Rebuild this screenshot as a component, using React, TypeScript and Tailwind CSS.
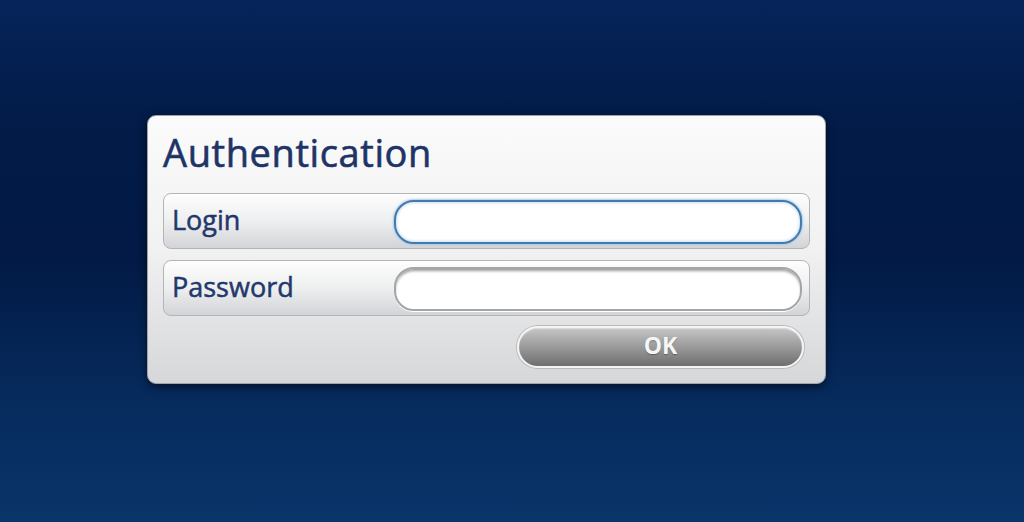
import React from 'react';

function Field({ label, focused }: { label: string; focused?: boolean }) {
    return (
        <div className="flex h-[56px] items-center rounded-[8px] border border-[#b3b4b7] bg-gradient-to-b from-[#fdfdfd] via-[#eeeff0] to-[#d3d4d7] pl-[8px] pr-[7px] shadow-[inset_0_1px_0_#ffffff]">
            <span className="mb-[4px] w-[222px] text-[27px] leading-none tracking-[0px] text-[#22386b] [-webkit-text-stroke:0.5px_#22386b]">{label}</span>
            <div
                className={
                    focused
                        ? 'mt-[1px] h-[44px] flex-1 rounded-[20px] border-2 border-[#4579ab] bg-white shadow-[0_0_2px_1px_#a9cbe8,inset_0_0_3px_1px_#c8e0f4]'
                        : 'mt-[1px] h-[44px] flex-1 rounded-[20px] border-2 border-[#a4a5a8] bg-white shadow-[inset_0_3px_3px_-1px_#9c9c9c,0_1px_0_#ffffff]'
                }
            />
        </div>
    );
}

export default function App() {
    return (
        <div
            className="h-[522px] w-full overflow-hidden bg-[linear-gradient(180deg,#06245a_0%,#021b47_25%,#021a45_50%,#062a5c_75%,#0a356a_100%)] pl-[147px] pt-[115px]"
            style={{ fontFamily: '"Open Sans", "Liberation Sans", sans-serif' }}
        >
            {/* Dialog */}
            <div className="flex w-[679px] flex-col rounded-[9px] border border-[#9fa3aa] bg-gradient-to-b from-[#fbfbfb] via-[#f1f1f2] to-[#d6d7d9] px-[15px] pb-[15px] shadow-[0_3px_8px_rgba(0,0,0,0.55)]">
                <h1 className="mt-[13px] mb-[18px] h-[46px] text-[38px] leading-[46px] tracking-[0.6px] text-[#1e3466] [-webkit-text-stroke:0.6px_#1e3466]">
                    Authentication
                </h1>

                <div className="flex flex-col gap-[11px]">
                    <Field label="Login" focused />
                    <Field label="Password" />
                </div>

                <div className="mt-[10px] flex justify-end pr-[6px]">
                    <button className="flex h-[42px] w-[287px] items-center justify-center rounded-full border-2 border-[#f4f4f5] bg-gradient-to-b from-[#c6c6c7] via-[#9a9a9b] to-[#6f6f70] pb-[4px] text-[23px] font-bold text-[#f6f6f6] shadow-[0_0_0_1px_#b9babd,inset_0_1px_1px_rgba(255,255,255,0.4)] [text-shadow:0_1px_1px_rgba(0,0,0,0.3)]">
                        OK
                    </button>
                </div>
            </div>
        </div>
    );
}
